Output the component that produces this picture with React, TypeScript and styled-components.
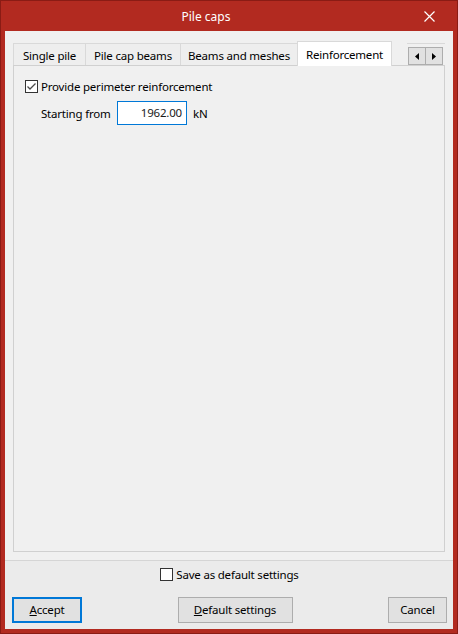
import React from 'react';
import styled, { createGlobalStyle, css } from 'styled-components';

const GlobalStyle = createGlobalStyle`
  html, body {
    margin: 0;
    padding: 0;
    background: #ffffff;
  }
  body {
    font-family: "Noto Sans", "Liberation Sans", sans-serif;
    font-size: 11.5px;
    letter-spacing: -0.2px;
    color: #000000;
  }
`;

const Window = styled.div`
  width: 458px;
  height: 634px;
  box-sizing: border-box;
  border: 1px solid #8a1b14;
  background: #b22a20;
  display: flex;
  flex-direction: column;
`;

const TitleBar = styled.div`
  height: 30px;
  display: flex;
  align-items: center;
  color: #ffffff;
`;

const Title = styled.div`
  flex: 1;
  text-align: center;
  font-size: 12px;
  letter-spacing: 0;
  padding-top: 1px;
`;

const CloseButton = styled.div`
  width: 46px;
  height: 30px;
  box-sizing: border-box;
  display: flex;
  align-items: center;
  justify-content: center;
  padding: 1px 9px 0 0;
`;

const Client = styled.div`
  flex: 1;
  margin: 0 4px 4px;
  background: #f0f0f0;
  display: flex;
  flex-direction: column;
`;

const Main = styled.div`
  flex: 1;
  padding: 10px 8px 8px;
  display: flex;
  flex-direction: column;
`;

const TabRow = styled.div`
  height: 24px;
  display: flex;
  align-items: flex-end;
`;

const Tab = styled.div<{ active?: boolean; width: number }>`
  width: ${({ width }) => width}px;
  height: 22px;
  box-sizing: border-box;
  border: 1px solid #d9d9d9;
  border-bottom: none;
  background: #eeeeee;
  display: flex;
  align-items: center;
  justify-content: center;
  padding-top: 1px;
  white-space: nowrap;
  & + & {
    margin-left: -1px;
  }
  ${({ active }) =>
    active &&
    css`
      height: 25px;
      margin-bottom: -1px;
      background: #ffffff;
      position: relative;
      z-index: 1;
      padding-bottom: 1px;
    `}
`;

const ScrollArrows = styled.div`
  margin-left: auto;
  width: 38px;
  height: 22px;
  box-sizing: border-box;
  border-top: 1px solid #d9d9d9;
  padding: 3px 0 0 1px;
  display: flex;
`;

const ArrowButton = styled.div`
  width: 18px;
  height: 18px;
  box-sizing: border-box;
  border: 1px solid #adadad;
  background: #e1e1e1;
  display: flex;
  align-items: center;
  justify-content: center;
  & + & {
    margin-left: -1px;
  }
`;

const Panel = styled.div`
  flex: 1;
  border: 1px solid #d0d0d0;
  background: #f0f0f0;
  padding: 14px 11px;
  display: flex;
  flex-direction: column;
`;

const CheckRow = styled.label`
  display: flex;
  align-items: center;
  gap: 3px;
  height: 13px;
  white-space: nowrap;
`;

const Box = styled.span`
  width: 13px;
  height: 13px;
  box-sizing: border-box;
  border: 1px solid #333333;
  background: #ffffff;
  display: inline-flex;
  align-items: center;
  justify-content: center;
  flex: none;
`;

const FieldRow = styled.div`
  display: flex;
  align-items: center;
  margin: 8px 0 0 16px;
  height: 24px;
`;

const FieldLabel = styled.span`
  width: 76px;
  white-space: nowrap;
`;

const NumberBox = styled.div`
  width: 70px;
  height: 24px;
  box-sizing: border-box;
  border: 1px solid #0078d7;
  background: #ffffff;
  display: flex;
  align-items: center;
  justify-content: flex-end;
  padding: 0 4px 1px;
  color: #1a1a1a;
`;

const Unit = styled.span`
  margin-left: 6px;
`;

const Separator = styled.div`
  height: 1px;
  background: #d5d5d5;
`;

const Footer = styled.div`
  background: #ebebeb;
  padding: 5px 6px 6px 7px;
  display: flex;
  flex-direction: column;
`;

const FooterCheck = styled.div`
  height: 16px;
  display: flex;
  justify-content: center;
  align-items: center;
  margin-bottom: 15px;
`;

const ButtonRow = styled.div`
  display: flex;
  justify-content: space-between;
`;

const Button = styled.div<{ width: number; focused?: boolean }>`
  width: ${({ width }) => width}px;
  height: 26px;
  box-sizing: border-box;
  border: 1px solid #adadad;
  background: #e1e1e1;
  display: flex;
  align-items: center;
  justify-content: center;
  padding-bottom: 1px;
  ${({ focused }) =>
    focused &&
    css`
      border: 2px solid #0078d7;
    `}
`;

const tabs = [
  { label: 'Single pile', width: 73 },
  { label: 'Pile cap beams', width: 96 },
  { label: 'Beams and meshes', width: 118 },
  { label: 'Reinforcement', width: 95, active: true },
];

const CheckMark = () => (
  <svg width="11" height="11" viewBox="0 0 11 11">
    <path d="M1.5 5.5 L4 8 L9.5 2.5" fill="none" stroke="#4a4a4a" strokeWidth="1.3" />
  </svg>
);

const Arrow = ({ dir }: { dir: 'left' | 'right' }) => (
  <svg width="4" height="7" viewBox="0 0 4 7">
    {dir === 'left' ? <path d="M4 0 L0 3.5 L4 7 Z" fill="#000" /> : <path d="M0 0 L4 3.5 L0 7 Z" fill="#000" />}
  </svg>
);

export default function App() {
  return (
    <>
      <GlobalStyle />
      <Window>
        <TitleBar>
          <Title>Pile caps</Title>
          <CloseButton>
            <svg width="11" height="11" viewBox="0 0 11 11">
              <path d="M0.5 0.5 L10.5 10.5 M10.5 0.5 L0.5 10.5" stroke="#ffffff" strokeWidth="1.2" />
            </svg>
          </CloseButton>
        </TitleBar>
        <Client>
          <Main>
            <TabRow>
              {tabs.map((t) => (
                <Tab key={t.label} width={t.width} active={t.active}>
                  {t.label}
                </Tab>
              ))}
              <ScrollArrows>
                <ArrowButton>
                  <Arrow dir="left" />
                </ArrowButton>
                <ArrowButton>
                  <Arrow dir="right" />
                </ArrowButton>
              </ScrollArrows>
            </TabRow>
            <Panel>
              <CheckRow>
                <Box>
                  <CheckMark />
                </Box>
                Provide perimeter reinforcement
              </CheckRow>
              <FieldRow>
                <FieldLabel>Starting from</FieldLabel>
                <NumberBox>1962.00</NumberBox>
                <Unit>kN</Unit>
              </FieldRow>
            </Panel>
          </Main>
          <Separator />
          <Footer>
            <FooterCheck>
              <CheckRow>
                <Box />
                Save as default settings
              </CheckRow>
            </FooterCheck>
            <ButtonRow>
              <Button width={70} focused>
                <span>
                  <u>A</u>ccept
                </span>
              </Button>
              <Button width={115}>
                <span>
                  <u>D</u>efault settings
                </span>
              </Button>
              <Button width={59}>Cancel</Button>
            </ButtonRow>
          </Footer>
        </Client>
      </Window>
    </>
  );
}
